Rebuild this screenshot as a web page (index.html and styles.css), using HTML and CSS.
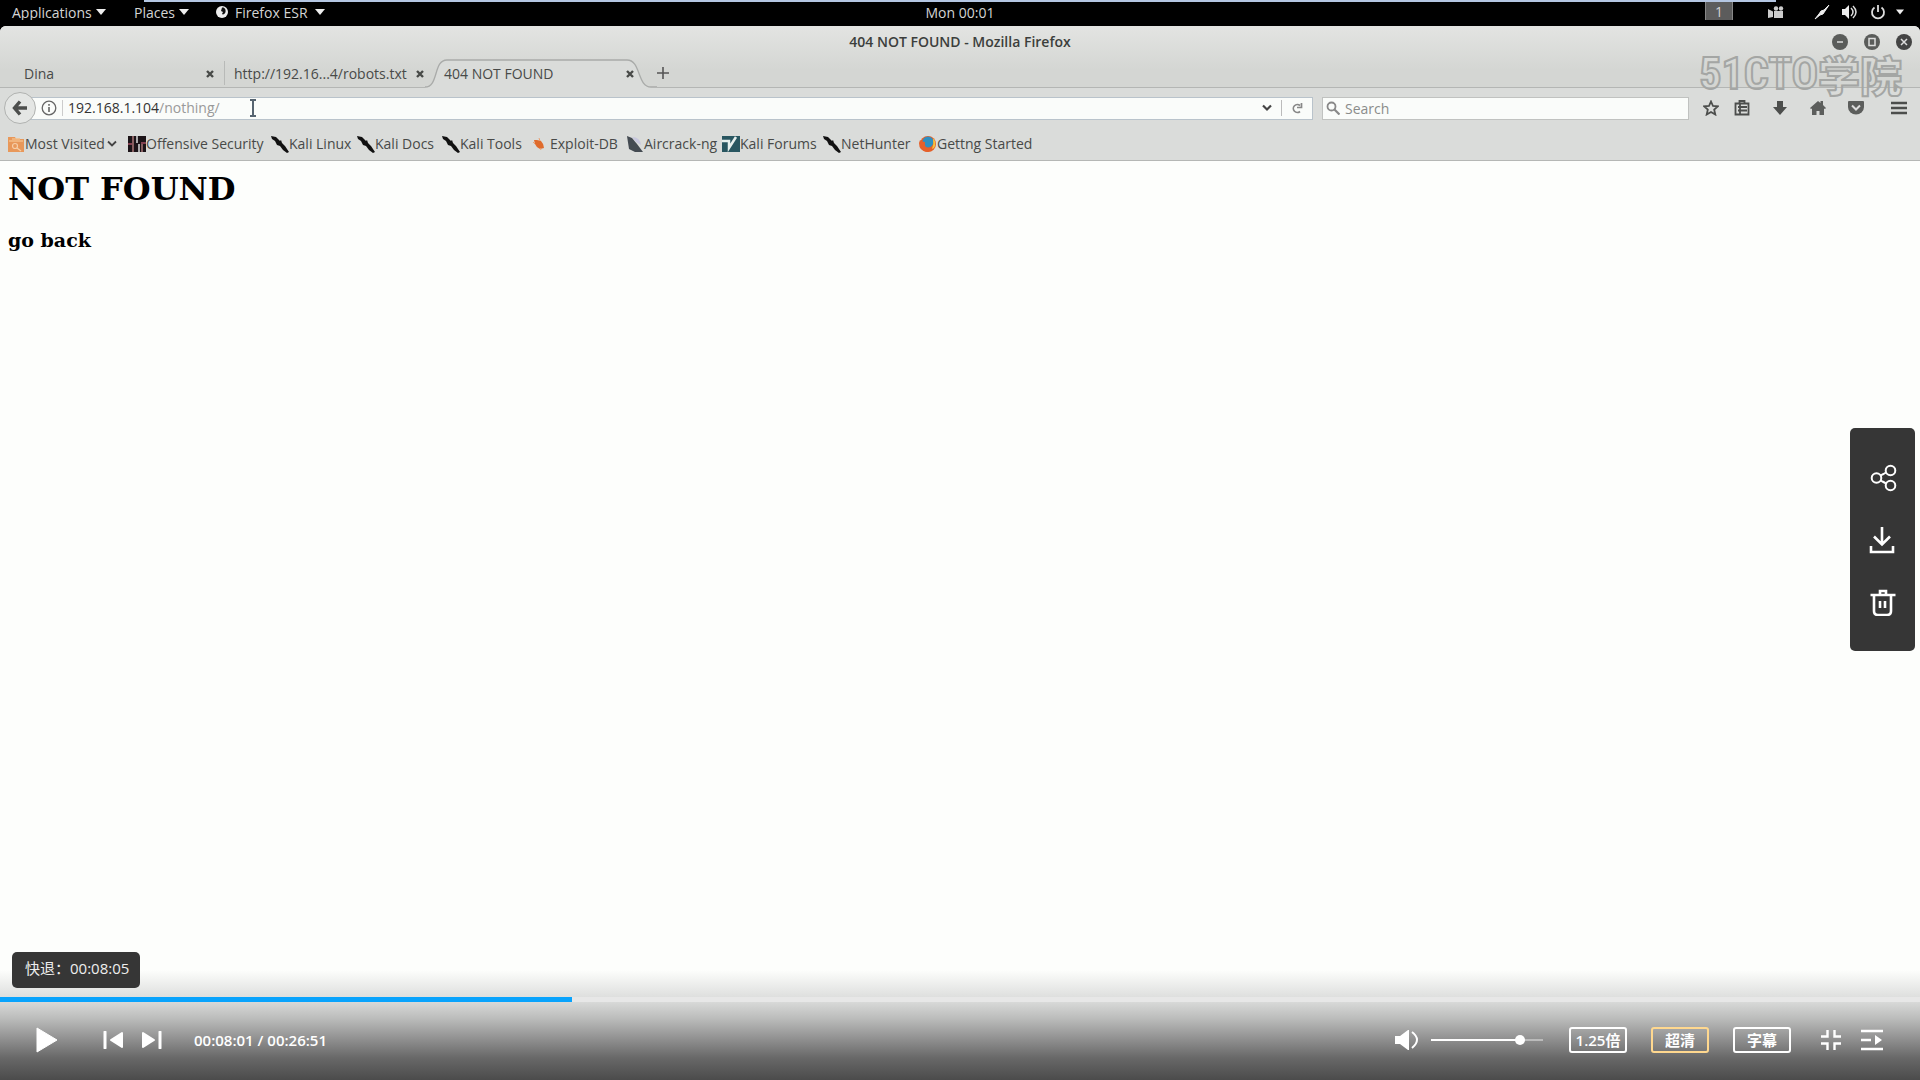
FILE: index.html
```html
<!DOCTYPE html>
<html lang="zh-CN">
<head>
<meta charset="utf-8">
<title>404 NOT FOUND</title>
<link rel="stylesheet" href="styles.css">
</head>
<body>
<svg class="sprite" aria-hidden="true">
  <symbol id="kali" viewBox="0 0 18 18"><path d="M0 1l5 1 4 4 1-1 1 3 3 3 4 6-2 1-4-3-3-4-3-1-2-4-3-2z" fill="#111"/></symbol>
  <symbol id="cross" viewBox="0 0 10 10"><path d="M2 2l6 6M8 2l-6 6" stroke="#484a48" stroke-width="2.400"/></symbol>
  <symbol id="caret" viewBox="0 0 10 6"><path d="M0 0h10L5 6z" fill="#eee"/></symbol>
</svg>

<div class="player">
  <header class="topbar">
    <nav class="menus">
      <button class="menu menu-apps">Applications <svg class="caret"><use href="#caret"/></svg></button>
      <button class="menu menu-places">Places <svg class="caret"><use href="#caret"/></svg></button>
      <button class="menu menu-firefox"><svg class="globe" viewBox="0 0 12 12"><circle cx="6" cy="6" r="6" fill="#eee"/><path d="M6 1.500C9 1 10 4 9.500 6S7 9 6 8l1-2-2-1z" fill="#111"/></svg>Firefox ESR <svg class="caret"><use href="#caret"/></svg></button>
    </nav>
    <time class="clock">Mon 00:01</time>
    <div class="status">
      <span class="workspace">1</span>
      <svg class="st st-camera" viewBox="0 0 16 12"><path d="M0 3l5 2.500V11L0 12zM6 5h9v7H6z" fill="#ccc"/><circle cx="8" cy="2.500" r="2.200" fill="#ccc"/><circle cx="13" cy="2.500" r="2.200" fill="#ccc"/></svg>
      <svg class="st st-pen" viewBox="0 0 16 16"><path d="M1 15l4-5 2-3 3-1 5-5-4 6-2 3-3 1z" fill="#eee" stroke="#eee"/></svg>
      <svg class="st st-vol" viewBox="0 0 16 16"><path d="M0 5h3l4-4v14l-4-4H0z" fill="#eee"/><path d="M9 4q4 4 0 8M11 2q6 6 0 12" fill="none" stroke="#ddd" stroke-width="1.500"/></svg>
      <svg class="st st-power" viewBox="0 0 16 16"><path d="M4.500 3.500a6 6 0 1 0 7 0M8 1v7" fill="none" stroke="#ddd" stroke-width="1.800"/></svg>
      <svg class="caret caret-small"><use href="#caret"/></svg>
    </div>
    <span class="topline"></span>
  </header>

  <section class="chrome">
    <div class="titlebar">
      <strong class="title">404 NOT FOUND - Mozilla Firefox</strong>
      <div class="wincontrols">
        <button class="win" aria-label="Minimize"><svg viewBox="0 0 16 16"><path d="M5 8h6" stroke="#ddd" stroke-width="1.500"/></svg></button>
        <button class="win" aria-label="Maximize"><svg viewBox="0 0 16 16"><path d="M5 4.500h6v7H5z" fill="none" stroke="#ddd" stroke-width="1.500"/></svg></button>
        <button class="win win-close" aria-label="Close"><svg viewBox="0 0 16 16"><path d="M5 5l6 6M11 5l-6 6" stroke="#ddd" stroke-width="1.500"/></svg></button>
      </div>
    </div>
    <div class="tabs">
      <div class="tab tab-first"><span>Dina</span><button class="tabx" aria-label="Close tab"><svg><use href="#cross"/></svg></button></div>
      <div class="tab tab-second"><span>http://192.16...4/robots.txt</span><button class="tabx" aria-label="Close tab"><svg><use href="#cross"/></svg></button></div>
      <div class="tab tab-active">
        <svg class="tabshape" viewBox="0 0 232 30"><path d="M0 28C14 28 8 1 22 1H202C216 1 212 28 226 28H232V30H0z" fill="#dadcda"/><path d="M0 28C14 28 8 1 22 1H202C216 1 212 28 226 28H232" fill="none" stroke="#a9aba9" stroke-width="1.300"/></svg>
        <span>404 NOT FOUND</span><button class="tabx" aria-label="Close tab"><svg><use href="#cross"/></svg></button>
      </div>
      <button class="newtab" aria-label="New tab"><svg viewBox="0 0 12 12"><path d="M6 0v12M0 6h12" stroke="#555" stroke-width="1.600"/></svg></button>
    </div>
    <div class="navbar">
      <button class="back" aria-label="Back"><svg viewBox="0 0 16 16"><path d="M8 1.500L2.500 8 8 14.500M3 8h12" fill="none" stroke="#4c4e4c" stroke-width="3.400"/></svg></button>
      <div class="urlbar">
        <svg class="info" viewBox="0 0 16 16"><circle cx="8" cy="8" r="6.800" fill="none" stroke="#666" stroke-width="1.300"/><path d="M8 7v5M8 4v1.800" stroke="#666" stroke-width="1.600"/></svg>
        <a class="address" href="#">192.168.1.104<i>/nothing/</i></a>
        <svg class="ibeam" viewBox="0 0 8 18"><path d="M1 1h6M1 17h6M4 1v16" fill="none" stroke="#566470" stroke-width="2"/></svg>
        <button class="drop" aria-label="History"><svg viewBox="0 0 10 8"><path d="M1 1.500l4 4 4-4" fill="none" stroke="#444" stroke-width="2.200"/></svg></button>
        <button class="reload" aria-label="Reload"><svg viewBox="0 0 12 12"><path d="M9 9.500a4 4 0 1 1 0-6M10.500 1v4.500H6" fill="none" stroke="#888" stroke-width="1.700"/></svg></button>
      </div>
      <label class="search"><svg viewBox="0 0 14 14"><circle cx="5.500" cy="5.500" r="4" fill="none" stroke="#888" stroke-width="1.800"/><path d="M8.500 8.500l5 5" stroke="#888" stroke-width="2.200"/></svg><input type="search" placeholder="Search" aria-label="Search"></label>
      <div class="tools">
        <button aria-label="Bookmark"><svg viewBox="0 0 16 16"><path d="M8 1.500l2 4.500 4.800.4-3.600 3.200 1.100 4.900L8 12l-4.300 2.500 1.100-4.900L1.200 6.400 6 6z" fill="none" stroke="#4c4e4c" stroke-width="1.800"/></svg></button>
        <button aria-label="Bookmarks list"><svg viewBox="0 0 16 16"><path d="M1.500 3.500h13v11h-13zM5.500 3V1h5v2M4 7h9M4 10.500h9M6 4v10" fill="none" stroke="#4c4e4c" stroke-width="1.800"/></svg></button>
        <button aria-label="Downloads"><svg viewBox="0 0 16 16"><path d="M5 1h6v6h4l-7 8-7-8h4z" fill="#4c4e4c"/></svg></button>
        <button aria-label="Home"><svg viewBox="0 0 16 16"><path d="M0 8l8-7 2.500 2V1H13v4l3 3-1 1-1-.6V15H9.500v-4h-3v4H2V8.400L1 9z" fill="#5c5e5c"/></svg></button>
        <button aria-label="Pocket"><svg viewBox="0 0 16 16"><path d="M0 2q0-1 1-1h14q1 0 1 1v5a8 7.500 0 0 1-16 0z" fill="#5c5e5c"/><path d="M4 5.500l4 4 4-4" fill="none" stroke="#ddd" stroke-width="2"/></svg></button>
        <button class="tool-menu" aria-label="Menu"><svg viewBox="0 0 16 14"><path d="M0 2h16M0 7h16M0 12h16" stroke="#4c4e4c" stroke-width="2.400"/></svg></button>
      </div>
    </div>
    <nav class="bookmarks">
      <a href="#"><svg viewBox="0 0 18 18"><path d="M1 2h7l1 2h8v13H1z" fill="#e8985a"/><path d="M2 6h14M5 4h8" stroke="#f3bd88" stroke-width="1.500"/><circle cx="8" cy="11" r="2.500" fill="none" stroke="#f6cfa8" stroke-width="1.200"/><path d="M10 13l4 3" stroke="#f6cfa8" stroke-width="1.200"/></svg>Most Visited<svg class="chev" viewBox="0 0 10 8"><path d="M1 1.500l4 4 4-4" fill="none" stroke="#444" stroke-width="1.800"/></svg></a>
      <a href="#"><svg viewBox="0 0 18 18"><path d="M0 1h18v16H0z" fill="#1c1418"/><path d="M5 1v16M14 9v8" stroke="#a77" stroke-width="1.500"/><path d="M9 1v7M11 9v8" stroke="#ddd" stroke-width="1.500"/><path d="M0 9h4M13 8h5" stroke="#824050" stroke-width="2"/></svg>Offensive Security</a>
      <a href="#"><svg><use href="#kali"/></svg>Kali Linux</a>
      <a href="#"><svg><use href="#kali"/></svg>Kali Docs</a>
      <a href="#"><svg><use href="#kali"/></svg>Kali Tools</a>
      <a href="#"><svg viewBox="0 0 18 18"><path d="M2 5l3 0 4 1q3 3 3 7l-4 1q-4-2-5-5z" fill="#df6b2c"/><path d="M1 7l2 2M7 3l1 3M8 13l1 2" stroke="#eba070"/></svg>Exploit-DB</a>
      <a href="#"><svg viewBox="0 0 18 18"><path d="M1 1l5 2 5 6 6 8-8 0-6-3z" fill="#444b52"/><path d="M6 2q8 0 9 8l-5-3z" fill="#c8c8de"/></svg>Aircrack-ng</a>
      <a href="#"><svg viewBox="0 0 18 18"><path d="M0 1h18v16H0z" fill="#285660"/><path d="M0 6h7v7l7-11" fill="none" stroke="#e6efed" stroke-width="2.500"/></svg>Kali Forums</a>
      <a href="#"><svg><use href="#kali"/></svg>NetHunter</a>
      <a href="#"><svg viewBox="0 0 18 18"><circle cx="9" cy="9" r="8" fill="#e2602a"/><circle cx="9" cy="7" r="5.500" fill="#2f8fc0"/><path d="M1 5q2 2 5 2-1 5 3 6 5 0 6-7 2 5-1 8-3 3-6 3-8-1-8-9z" fill="#e5602a"/><path d="M14 3q4 5 1 10l-2 1q2-5 1-11z" fill="#f6c23c"/></svg>Gettng Started</a>
    </nav>
    <div class="watermark" aria-hidden="true"><span class="wm-latin">51CTO</span><span class="wm-cjk">学院</span></div>
  </section>

  <main class="page">
    <h1>NOT FOUND</h1>
    <h3>go back</h3>
  </main>

  <aside class="side">
    <button aria-label="分享"><svg viewBox="0 0 28 28"><g fill="none" stroke="#fff" stroke-width="2"><circle cx="7.500" cy="14" r="4.800"/><circle cx="21.500" cy="6.500" r="4.800"/><circle cx="21.500" cy="21.500" r="4.800"/><path d="M11.800 11.500L13.500 10.500q2-1 3.500-2M11.800 16.500l1.700 1q2 1 3.500 2"/></g></svg></button>
    <button aria-label="下载"><svg viewBox="0 0 28 28"><path d="M13 1v18M5 10.500l8 8 8-8M2 20v6h22v-6" fill="none" stroke="#fff" stroke-width="2.600"/></svg></button>
    <button aria-label="删除"><svg viewBox="0 0 28 28"><path d="M1.500 7h25M11 7V3h6v4M5 7v16q0 4 4 4h9q4 0 4-4V7M11 13v7M16 13v7" fill="none" stroke="#fff" stroke-width="2.600"/></svg></button>
  </aside>

  <output class="tip">快退：00:08:05</output>

  <footer class="controls">
    <progress class="seek" max="1920" value="572" aria-label="播放进度"></progress>
    <div class="bar">
      <button class="play" aria-label="播放"><svg viewBox="0 0 22 26"><path d="M1 1l20 12L1 25z" fill="#fff" stroke="#fff" stroke-linejoin="round"/></svg></button>
      <button class="skip" aria-label="上一个"><svg viewBox="0 0 20 18"><path d="M2 1v16" stroke="#fff" stroke-width="3" stroke-linecap="round"/><path d="M19 2v14L8 9z" fill="#fff" stroke="#fff" stroke-width="2" stroke-linejoin="round"/></svg></button>
      <button class="skip" aria-label="下一个"><svg viewBox="0 0 20 18"><path d="M18 1v16" stroke="#fff" stroke-width="3" stroke-linecap="round"/><path d="M1 2v14L12 9z" fill="#fff" stroke="#fff" stroke-width="2" stroke-linejoin="round"/></svg></button>
      <span class="time">00:08:01 / 00:26:51</span>
      <button class="mute" aria-label="静音"><svg viewBox="0 0 24 20"><path d="M0 6h5l8-6h1v20h-1l-8-6H0z" fill="#fff"/><path d="M17 2q10 7.500 0 16" fill="none" stroke="#fff" stroke-width="2"/></svg></button>
      <input class="volume" type="range" min="0" max="100" value="82" aria-label="音量">
      <button class="pill">1.25倍</button>
      <button class="pill pill-gold">超清</button>
      <button class="pill">字幕</button>
      <button class="exit" aria-label="退出全屏"><svg viewBox="0 0 22 22"><path d="M1 7.500h6.500V1M21 7.500h-6.500V1M1 14.500h6.500V21M21 14.500h-6.500V21" fill="none" stroke="#fff" stroke-width="2.400"/></svg></button>
      <button class="list" aria-label="播放列表"><svg viewBox="0 0 22 22"><path d="M0 2h22M0 11h10M0 20h22" stroke="#fff" stroke-width="2.400"/><path d="M14 6v10l7-5z" fill="#fff"/></svg></button>
    </div>
  </footer>
</div>
</body>
</html>
```
FILE: styles.css
```css
* { box-sizing: border-box; }
body { margin: 0; background: #fdfefc; font-family: "Open Sans", "Noto Sans", "Noto Sans CJK SC", sans-serif; font-size: 14px; color: #484a48; }
button { border: 0; padding: 0; margin: 0; background: none; font: inherit; color: inherit; display: flex; align-items: center; justify-content: center; }
a { color: inherit; text-decoration: none; }
svg { display: block; flex: none; }
.sprite { position: absolute; width: 0; height: 0; }
.player { position: relative; min-height: 100vh; display: flex; flex-direction: column; background: #fdfefc; }

.topbar { position: relative; height: 26px; padding-bottom: 2px; background: #000; color: #d4d4d4; display: grid; grid-template-columns: 1fr auto 1fr; align-items: center; }
.topline { position: absolute; top: 0; left: 144px; right: 144px; height: 2px; background: #b4c6e2; }
.caret { width: 10px; height: 6px; }
.caret-small { width: 8px; }
.menus { display: flex; padding-left: 12px; }
.menu { gap: 4px; justify-content: flex-start; white-space: nowrap; }
.menu-apps { width: 122px; }
.menu-places { width: 82px; }
.menu-firefox { gap: 7px; }
.globe { width: 12px; height: 12px; }
.status { display: flex; align-items: center; justify-content: flex-end; padding-right: 16px; }
.workspace { width: 28px; height: 22px; line-height: 20px; border: 1px solid #888; background: #5c5c5c; text-align: center; }
.st { width: 16px; height: 16px; margin-right: 12px; }
.st-power { margin-right: 10px; }
.st-camera { height: 12px; margin-left: 35px; margin-right: 30px; }

.chrome { position: relative; background: linear-gradient(#e3e4e2 0, #d4d6d3 44px, #d4d6d3 61px, #dadcda 62px); border-bottom: 1px solid #b5b7b5; border-radius: 6px 6px 0 0; box-shadow: 0 -6px 0 #000; }
.titlebar { height: 32px; display: grid; grid-template-columns: 1fr auto 1fr; align-items: center; }
.title { grid-column: 2; font-size: 14px; font-weight: 600; line-height: 18px; padding-bottom: 1px; color: #3c3e3c; }
.wincontrols { display: flex; gap: 16px; justify-content: flex-end; padding-right: 8px; }
.win { width: 16px; height: 16px; border-radius: 50%; background: #5a5c5a; }
.win-close { background: #444; }
.win svg { width: 16px; height: 16px; }
.tabs { height: 30px; display: flex; align-items: center; border-bottom: 1px solid #b4b6b4; }
.tab { display: flex; align-items: center; justify-content: space-between; height: 24px; padding-top: 2px; white-space: nowrap; }
.tab-first { width: 225px; padding-left: 24px; padding-right: 9px; border-right: 1px solid #b8bab8; }
.tab-second { width: 200px; padding-left: 9px; }
.tab-active { position: relative; width: 232px; padding-left: 19px; padding-right: 22px; }
.tab-active span, .tab-active .tabx { position: relative; }
.tabshape { position: absolute; left: 0; top: -2px; width: 232px; height: 30px; }
.tabx, .tabx svg { width: 10px; height: 10px; }
.newtab svg { width: 12px; height: 12px; }
.navbar { height: 40px; display: flex; align-items: center; }
.back { position: relative; z-index: 1; width: 32px; height: 32px; margin-left: 4px; border: 1px solid #b0b2b0; border-radius: 50%; background: #e4e6e4; }
.back svg { width: 16px; height: 16px; }
.urlbar { flex: 1; margin-left: -6px; height: 23px; display: flex; align-items: center; background: #fafcfa; border: 1px solid #b9c3cb; padding-left: 10px; }
.info { width: 16px; height: 16px; }
.address { margin-left: 5px; padding-left: 5px; border-left: 1px solid #ccc; line-height: 16px; color: #333; }
.address i { font-style: normal; color: #999; }
.ibeam { width: 8px; height: 18px; margin-left: 29px; }
.drop { margin-left: auto; width: 30px; height: 16px; border-right: 1px solid #bbb; }
.drop svg { width: 10px; height: 8px; }
.reload { width: 30px; }
.reload svg { width: 12px; height: 12px; }
.search { margin-left: 9px; width: 367px; height: 23px; display: flex; align-items: center; gap: 5px; padding-left: 3px; background: #fafcfa; border: 1px solid #c0c2c0; }
.search svg { width: 14px; height: 14px; }
.search input { flex: 1; min-width: 0; border: 0; padding: 0; background: none; font: inherit; outline: 0; }
.search input::placeholder { color: #8a8c8a; opacity: 1; }
.tools { width: 231px; display: flex; align-items: center; padding-left: 14px; gap: 22px; }
.tools button:first-child { margin-right: -7px; }
.tools svg { width: 16px; height: 16px; }
.tool-menu { margin-left: 5px; }
.bookmarks { height: 32px; padding: 0 0 1px 7px; display: grid; grid-template-columns: 121px 143px 86px 85px 90px 94px 96px 101px 96px 1fr; align-items: center; }
.bookmarks a { display: flex; align-items: center; white-space: nowrap; }
.bookmarks svg { width: 18px; height: 18px; }
.bookmarks .chev { width: 10px; height: 8px; margin-left: 2px; }
.watermark { position: absolute; top: 24px; right: 18px; height: 48px; display: flex; align-items: center; color: transparent; -webkit-text-stroke: 2px #a4a6a4; white-space: nowrap; pointer-events: none; }
.wm-latin { font: 700 44px/48px "Roboto Condensed", "Open Sans Condensed", "Liberation Sans", sans-serif; }
.wm-cjk { font: 900 42px/48px "Noto Sans CJK SC", sans-serif; }

.page { flex: 1; padding: 9px 8px; font-family: "DejaVu Serif", serif; color: #000; }
.page h1 { margin: 0; font-size: 32px; line-height: 38px; }
.page h3 { margin: 20px 0 0; font-size: 19px; line-height: 24px; }

.side { position: absolute; top: 428px; right: 5px; width: 65px; height: 223px; padding-top: 36px; display: flex; flex-direction: column; align-items: center; gap: 34px; border-radius: 5px; background: #363636; }
.side svg { width: 28px; height: 28px; }

.tip { position: absolute; left: 12px; bottom: 92px; width: 128px; height: 36px; border-radius: 5px; background: #363636; color: #eee; font-size: 15px; line-height: 32px; padding-left: 13px; white-space: nowrap; z-index: 2; }

.controls { position: absolute; left: 0; right: 0; bottom: 0; height: 110px; padding-top: 27px; background: linear-gradient(#fdfefc 0, #dedfde 27px, #d8d9d8 32px, #bcbdbc 48px, #8e8e8e 70px, #686868 88px, #4b4b4b 110px); }
.seek { display: block; width: 100%; height: 5px; appearance: none; border: 0; background: #e7e7e7; }
.seek::-webkit-progress-bar { background: #e7e7e7; }
.seek::-webkit-progress-value { background: #09a3fc; }
.bar { height: 76px; display: flex; align-items: center; padding: 0 37px 0 36px; color: #fff; }
.play svg { width: 22px; height: 26px; }
.skip svg { width: 20px; height: 18px; }
.play { margin-right: 45px; }
.skip { margin-right: 19px; }
.time { margin-left: 13px; font-size: 15px; font-weight: 600; }
.mute { margin-left: auto; }
.mute svg { width: 24px; height: 20px; }
.volume { appearance: none; width: 112px; height: 10px; margin: 0 26px 0 12px; background: linear-gradient(#fff, #fff) 0 4px / 82% 2px no-repeat, linear-gradient(#bbb, #bbb) 0 4px / 100% 2px no-repeat; }
.volume::-webkit-slider-thumb { appearance: none; width: 10px; height: 10px; border-radius: 50%; background: #fff; }
.pill { width: 58px; height: 26px; margin-right: 24px; border: 2px solid #fff; border-radius: 3px; font-size: 15px; font-weight: 600; line-height: 20px; }
.pill-gold { border-color: #ffd88f; }
.exit { margin: 0 19px 0 5px; }
.exit svg, .list svg { width: 22px; height: 22px; }
```
